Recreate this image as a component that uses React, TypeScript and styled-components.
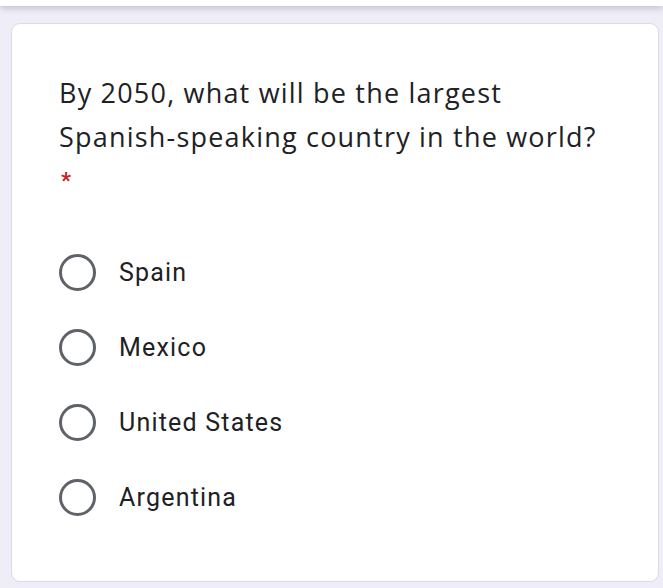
import React from 'react'
import styled, { createGlobalStyle } from 'styled-components'

const GlobalStyle = createGlobalStyle`
  html, body {
    margin: 0;
    padding: 0;
    background: #efedf7;
  }
  body {
    font-family: Roboto, "Liberation Sans", sans-serif;
  }
`

const Page = styled.div`
  width: 663px;
  height: 588px;
  overflow: hidden;
  display: flex;
  flex-direction: column;
`

const TopBar = styled.div`
  height: 6px;
  background: #fff;
  box-shadow: 0 2px 6px rgba(60, 50, 90, 0.28);
  flex-shrink: 0;
`

const Card = styled.div`
  margin: 17px 4px 0 11px;
  height: 559px;
  box-sizing: border-box;
  background: #fff;
  border: 1px solid #dadce0;
  border-radius: 9px;
  padding: 47px 40px 0 47px;
`

const Question = styled.div`
  font-family: "Open Sans", Roboto, sans-serif;
  font-size: 27px;
  line-height: 44px;
  color: #202124;
  letter-spacing: 1.2px;
`

const Required = styled.div`
  color: #c5221f;
  font-size: 22px;
  font-weight: 700;
  line-height: 24px;
  margin-top: 10px;
  padding-left: 2px;
`

const Options = styled.div`
  display: flex;
  flex-direction: column;
  gap: 37px;
  margin-top: 60px;
`

const Option = styled.label`
  display: flex;
  align-items: center;
  gap: 23px;
  height: 38px;
`

const Radio = styled.span`
  width: 37px;
  height: 37px;
  box-sizing: border-box;
  border: 3px solid #5f6368;
  border-radius: 50%;
  flex-shrink: 0;
`

const OptionText = styled.span`
  font-size: 25px;
  color: #202124;
  letter-spacing: 1.2px;
`

const choices = ['Spain', 'Mexico', 'United States', 'Argentina']

export default function App() {
  return (
    <Page>
      <GlobalStyle />
      <TopBar />
      <Card>
        <Question>
          By 2050, what will be the largest
          <br />
          Spanish-speaking country in the world?
        </Question>
        <Required>*</Required>
        <Options>
          {choices.map((c) => (
            <Option key={c}>
              <Radio />
              <OptionText>{c}</OptionText>
            </Option>
          ))}
        </Options>
      </Card>
    </Page>
  )
}
